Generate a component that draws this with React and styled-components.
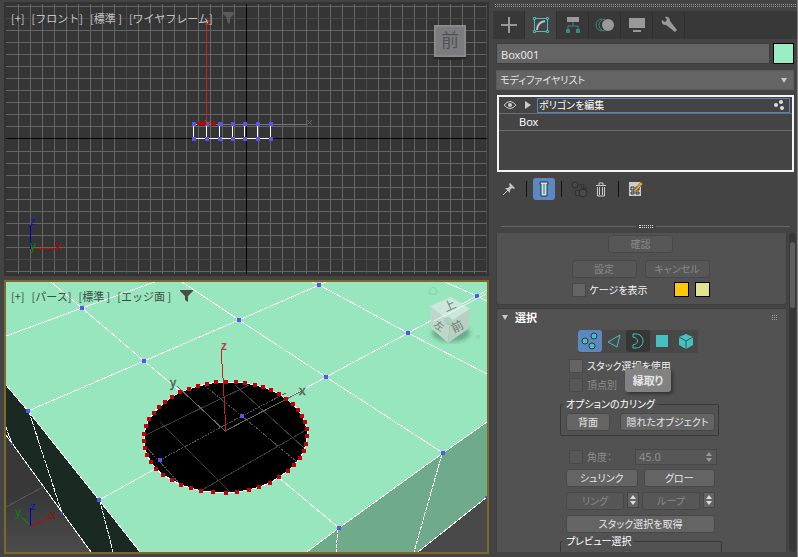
import { useState } from "react";
import styled, { createGlobalStyle, css } from "styled-components";

const GlobalStyle = createGlobalStyle`
    * {
        box-sizing: border-box;
    }
    body {
        margin: 0;
        background: #444;
        color: #e6e6e6;
        font-family: "Noto Sans", "Noto Sans CJK JP", sans-serif;
        font-size: 11px;
        line-height: 16px;
    }
    button, input, select {
        margin: 0;
        padding: 0;
        border: 0;
        font: inherit;
        color: inherit;
    }
`;

const Workspace = styled.div`
    display: grid;
    grid-template-columns: minmax(0, 1fr) 305px;
    gap: 4px;
    height: 100vh;
    padding-left: 4px;
`;

const Viewports = styled.main`
    display: grid;
    grid-template-rows: minmax(0, 1fr) minmax(0, 1fr);
    gap: 4px;
    padding: 2px 0 3px;
`;

const Viewport = styled.section`
    position: relative;
    overflow: hidden;
    border: 2px solid ${props => props.$active ? '#7e672a' : '#333'};
    background: #353535;
`;

const Scene = styled.svg`
    display: block;
    width: 100%;
    height: 100%;
    font-family: "Liberation Sans", sans-serif;
`;

const ViewportMenu = styled.div`
    position: absolute;
    top: ${props => props.$top}px;
    left: 5px;
    display: flex;
    align-items: center;
    gap: 7px;
`;

const ViewportLabel = styled.button`
    background: none;
    color: ${props => props.$dark ? '#3c4a43' : '#c4c4c4'};
    font-family: "Noto Sans CJK JP", sans-serif;
    white-space: nowrap;
`;

const FilterButton = styled.button`
    display: flex;
    margin-left: 2px;
    background: none;
    color: ${props => props.$dark ? '#4c4c4c' : '#5a5a5a'};
`;

const Panel = styled.aside`
    display: flex;
    flex-direction: column;
    min-height: 0;
    padding-bottom: 5px;
    border-right: 1px solid #858585;
    font-size: 10px;
    font-feature-settings: "palt";
`;

const Grip = styled.div`
    height: 3px;
    margin: 4px 1px 4px 2px;
    border-top: 1px dotted #999;
    border-bottom: 1px dotted #999;
`;

const Tabs = styled.nav`
    display: flex;
    height: 28px;
    background: #383838;
`;

const Tab = styled.button`
    display: flex;
    align-items: center;
    justify-content: center;
    width: 32px;
    border-right: 1px solid #303030;
    background: ${props => props.$active ? '#444' : 'none'};
`;

const NameRow = styled.div`
    display: flex;
    align-items: center;
    gap: 3px;
    margin: 4px 3px 0;
`;

const NameInput = styled.input`
    flex: 1;
    min-width: 0;
    height: 21px;
    padding: 1px 4px 0;
    border: 1px solid #3d3d3d;
    background: #646464;
    font-size: 11px;
`;

const Swatch = styled.button`
    width: ${props => props.$large ? 21 : 15}px;
    height: ${props => props.$large ? 21 : 15}px;
    border: 1px solid #000;
    background: ${props => props.$color};
`;

const ModifierSelect = styled.div`
    position: relative;
    margin: 6px 3px 0;

    select {
        display: block;
        width: 100%;
        height: 20px;
        padding: 0 3px;
        border: 1px solid #5a5a5a;
        appearance: none;
        background: #646464;
    }
    svg {
        position: absolute;
        right: 7px;
        top: 8px;
        pointer-events: none;
    }
`;

const Stack = styled.ul`
    height: 77px;
    margin: 5px 3px 0 4px;
    padding: 0;
    border: 2px solid #f4f4f4;
    list-style: none;
`;

const StackRow = styled.li`
    display: flex;
    align-items: center;
    height: 17px;
    padding: 0 2px 0 4px;
    border-bottom: 1px solid #6c6c6c;
`;

const StackName = styled.span`
    flex: 1;
    height: 15px;
    line-height: 14px;
    color: #fff;
    ${props => props.$selected ? css`
        display: flex;
        align-items: center;
        justify-content: space-between;
        margin-left: 6px;
        padding: 0 4px 0 1px;
        border: 1px solid #5a82bb;
    ` : css`
        margin-left: 16px;
        font-size: 11px;
    `}
`;

const Toolbar = styled.div`
    display: flex;
    align-items: center;
    height: 22px;
    margin: 6px 3px 0;
    padding-left: 2px;
`;

const ToolButton = styled.button`
    display: flex;
    align-items: center;
    justify-content: center;
    width: 22px;
    height: 22px;
    border-radius: 3px;
    background: ${props => props.$active ? '#5c88c2' : 'none'};
`;

const Separator = styled.span`
    width: 1px;
    height: 16px;
    margin: 0 6px;
    background: #111;
`;

const Splitter = styled.div`
    display: flex;
    align-items: center;
    gap: 3px;
    height: 5px;
    margin: 24px 7px 4px 8px;

    &::before, &::after {
        content: "";
        flex: 1;
        height: 1px;
        background: #666;
    }
    span {
        width: 14px;
        height: 3px;
        border-top: 1px dotted #ddd;
        border-bottom: 1px dotted #ddd;
    }
`;

const ScrollArea = styled.div`
    display: flex;
    flex: 1;
    gap: 2px;
    min-height: 0;
    padding: 0 1px 0 3px;
`;

const Rollouts = styled.div`
    display: flex;
    flex: 1;
    flex-direction: column;
    gap: 3px;
    min-width: 0;
    overflow: hidden;
`;

const ScrollTrack = styled.div`
    width: 7px;
    padding-top: 9px;
    border-radius: 4px;
    background: #373737;
`;

const ScrollThumb = styled.div`
    width: 5px;
    height: 66px;
    margin: 0 1px;
    border-radius: 3px;
    background: #5e5e5e;
`;

const Rollout = styled.section`
    flex: none;
    border: 1px solid #3e3e3e;
    border-radius: ${props => props.$open ? '0 0 3px 3px' : '3px'};
    background: #525252;
    ${props => props.$open && css`
        border-top: 0;
    `}
`;

const CageRollout = styled.div`
    display: flex;
    flex-direction: column;
    align-items: center;
    height: 71px;
    padding: 2px 2px 0 0;
`;

const ButtonPair = styled.div`
    display: flex;
    gap: 8px;
    margin-top: 7px;
`;

const CageOptions = styled.div`
    display: flex;
    align-items: center;
    gap: 6px;
    width: 138px;
    margin: 4px 0 0;

    label {
        flex: 1;
    }
`;

const PushButton = styled.button`
    width: ${props => props.$width ? props.$width + 'px' : 'auto'};
    flex: ${props => props.$width ? 'none' : 1};
    height: 18px;
    border: 1px solid #484848;
    border-radius: 3px;
    background: #646464;
    line-height: 16px;
    white-space: nowrap;

    &:disabled {
        background: #575757;
        color: #898989;
    }
`;

const CheckLabel = styled.label`
    display: flex;
    align-items: center;
    gap: 4px;
    height: 15px;
    color: ${props => props.$disabled ? '#8d8d8d' : '#f2f2f2'};
    white-space: nowrap;

    input {
        width: 14px;
        height: 14px;
        border: 1px solid #494949;
        appearance: none;
        background: ${props => props.$disabled ? '#575757' : '#646464'};
    }
    input:checked {
        background: #5c88c2;
    }
`;

const PreviewRadio = styled.input`
    width: 14px;
    height: 14px;
    margin-right: 30px;
    border: 1px solid #494949;
    border-radius: 50%;
    appearance: none;
    background: #646464;
`;

const RolloutTitle = styled.button`
    display: flex;
    align-items: center;
    gap: 7px;
    width: 100%;
    height: 17px;
    padding: 0 8px 0 5px;
    background: none;
    color: #fff;
    font-weight: bold;
    font-size: 11px;

    span {
        flex: 1;
        text-align: left;
    }
`;

const SelectionBody = styled.div`
    width: 162px;
    margin-left: 63px;
`;

const SubObjects = styled.div`
    display: flex;
    width: 120px;
    height: 23px;
    margin: 4px 0 0 18px;
    background: #484848;
`;

const SubObject = styled.button`
    position: relative;
    display: flex;
    align-items: center;
    justify-content: center;
    width: 24px;
    height: 22px;
    border-radius: 3px;
    background: ${props => props.$active ? '#5c88c2' : props.$hover ? '#363636' : 'none'};
`;

const Tooltip = styled.span`
    position: absolute;
    z-index: 1;
    top: 39px;
    left: -1px;
    width: 46px;
    height: 23px;
    border-radius: 3px;
    background: #828282;
    box-shadow: 2px 2px 3px #333;
    color: #e4e4e4;
    font-size: 11px;
    font-weight: bold;
    line-height: 23px;

    &::before {
        content: "";
        position: absolute;
        top: -7px;
        left: 8px;
        border: 6px solid transparent;
        border-top: 0;
        border-bottom: 7px solid #828282;
    }
`;

const Checks = styled.div`
    display: flex;
    flex-direction: column;
    gap: 4px;
    margin: 5px 0 4px 9px;
`;

const Group = styled.fieldset`
    display: flex;
    gap: 10px;
    min-width: 0;
    margin: 0 ${props => props.$wide ? 0 : 3}px 0 0;
    padding: 1px 3px 4px 5px;
    border: 1px solid #383838;
    border-radius: 2px;

    legend {
        margin-left: -3px;
        padding: 0 3px;
        color: #fff;
        line-height: 16px;
    }
`;

const Form = styled.div`
    display: grid;
    gap: 5px;
    margin: 13px 7px 0 6px;
`;

const FormRow = styled.div`
    display: flex;
    gap: ${props => props.$gap || 6}px;
`;

const AngleRow = styled.div`
    display: flex;
    align-items: center;
    justify-content: space-between;
    height: 15px;
    margin: 0 -2px 0 3px;
`;

const AngleField = styled.div`
    display: flex;
    align-items: center;
    width: 82px;
    height: 16px;
    padding: 0 4px 0 3px;
    border: 1px solid #484848;
    background: #575757;
    color: #8d8d8d;

    input {
        flex: 1;
        min-width: 0;
        height: 14px;
        background: none;
        font-size: 11px;
    }
`;

const Spinner = styled.button`
    display: flex;
    align-items: center;
    justify-content: center;
    width: 12px;
    height: 16px;
    background: #646464;
    border: 1px solid #474747;
`;

const CYAN = '#46c1c1';

const Arrows = ({ color = '#ddd' }) => (
    <svg width="6" height="10" viewBox="0 0 6 10" fill={color}>
        <path d="M0 4 3 0l3 4zM0 6h6L3 10z" />
    </svg>
);

const Funnel = () => (
    <svg width="13" height="12" viewBox="0 0 13 12" fill="currentColor">
        <path d="M0 0h13v1L8 6v6L5 10V6L0 1z" />
    </svg>
);

const DownArrow = ({ size = 6 }) => (
    <svg width={size} height={size - 1} viewBox="0 0 6 5" fill="#c8c8c8">
        <path d="M0 0h6L3 5z" />
    </svg>
);

const TABS = [
    ['作成', <svg key="i" width="18" height="18" stroke="#999" strokeWidth="2"><path d="M9 1v16M1 9h16" /></svg>],
    ['修正', <svg key="i" width="18" height="18" fill="none" stroke={CYAN}>
        <path d="M3.5 2.5h11M3.5 15.5h11M2.5 3.5v11M15.5 3.5v11" />
        <path d="M1.5 1.5h2v2h-2zM14.5 1.5h2v2h-2zM1.5 14.5h2v2h-2zM14.5 14.5h2v2h-2z" fill="#444" />
        <path d="M5 14c0-5 3-8 8-9" stroke="#c0c0c0" strokeWidth="2" />
    </svg>],
    ['階層', <svg key="i" width="16" height="18">
        <path d="M2 1h12v5H2z" fill="#999" />
        <path d="M8 6v4M3 14v-4h10v4" fill="none" stroke="#3a8585" strokeWidth="1" />
        <path d="M1 13h4v4H1zM11 13h4v4h-4z" fill="#3a8585" />
    </svg>],
    ['モーション', <svg key="i" width="20" height="16">
        <path d="M7 2a6 6 0 0 0 0 12M10 2a6 6 0 0 0 0 12" fill="none" stroke="#3a8585" />
        <circle cx="13" cy="8" r="6" fill="#999" />
    </svg>],
    ['表示', <svg key="i" width="18" height="16" fill="#999"><path d="M1 1h16v10H1zM5 13h8v2H5z" /></svg>],
    ['ユーティリティ', <svg key="i" width="18" height="18">
        <path d="M2 4l3 2 2-2-2-3c3-1 5 1 5 4l7 9-2 2-9-7C3 9 1 7 2 4z" fill="#999" />
    </svg>],
];

const VertexIcon = () => (
    <svg width="18" height="18" fill={CYAN} stroke="#333">
        <circle cx="13" cy="4" r="3" /><circle cx="4" cy="9" r="3" /><circle cx="11" cy="14" r="3" />
    </svg>
);

const SUB_OBJECTS = [
    ['頂点', <VertexIcon key="i" />],
    ['エッジ', <svg key="i" width="14" height="16" fill="none" stroke={CYAN}><path d="M13 2 1 9l9 5z" /></svg>],
    ['縁取り', <svg key="i" width="14" height="16" fill="none" stroke={CYAN}>
        <path d="M2 1h3c4 0 7 3 7 7s-3 7-7 7H2v-3c6-1 6-7 0-8z" />
    </svg>],
    ['ポリゴン', <svg key="i" width="14" height="14" fill={CYAN}><path d="M1 1h12v12H1z" /></svg>],
    ['要素', <svg key="i" width="16" height="16">
        <path d="m8 1 7 3v8l-7 4-7-4V4z" fill={CYAN} />
        <path d="m1 4 7 4 7-4M8 8v8" fill="none" stroke="#3c5555" />
    </svg>],
];

const Dots = ({ points, color, size = 4 }) => points.map(([x, y]) => (
    <rect key={`${x}-${y}`} x={x - size / 2} y={y - size / 2} width={size} height={size} fill={color} />
));

const GRID_X = Array.from({ length: 40 }, (_, i) => 18 + i * 12);
const GRID_Y = [...Array.from({ length: 11 }, (_, i) => 6 + i * 12), ...Array.from({ length: 11 }, (_, i) => 151 + i * 12)];
const BOX_X = [194, 207, 220, 233, 245, 258, 271];

const FrontScene = () => (
    <Scene viewBox="6 4 481 270" preserveAspectRatio="xMinYMin slice" aria-label="フロント">
        {GRID_X.map(x => <rect key={x} x={x} y="4" width="1" height="270" fill={x % 120 === 6 ? '#484848' : '#646464'} />)}
        {GRID_Y.map(y => <rect key={y} x="6" y={y} width="481" height="1" fill={y === 18 || y === 259 ? '#484848' : '#646464'} />)}
        <path d="M246 4h1v270h-1zM6 138h481v1H6z" fill="#000" />
        <g shapeRendering="crispEdges">
            <path d="M194 124.5h13M193 138.5h79" stroke="#fff" />
            {BOX_X.map(x => <path key={x} d={`M${x - 0.5} 124v15`} stroke="#fff" />)}
            <path d="M207 124.5h100" stroke="#777" />
            <Dots color="#5555f5" points={BOX_X.flatMap(x => [[x, 124], [x, 139]])} />
            <path d="M197 122h9v3h-9zM211 122h5v3h-5z" fill="#c00" />
            <path d="M206.500 24v101" stroke="#c92020" />
            <path d="M206 20h4l-4 4h4" stroke="#c92020" fill="none" />
            <path d="M30.500 225v24" stroke="#00c" />
            <path d="M31 248.500h25" stroke="#c00" />
        </g>
        <path d="m205 120 3 4m3-4-4 6M307 120l5 5m0-5-5 5" stroke="#686868" />
        <text x="30" y="225" fontSize="11" fill="#11c">z</text>
        <text x="30" y="250" fontSize="12" fill="#0a820a">y</text>
        <text x="55" y="250" fontSize="12" fill="#b00">x</text>
        <ellipse cx="450" cy="58" rx="17" ry="2" fill="#292929" />
        <rect x="434" y="25" width="32" height="32" fill="#909090" opacity="0.85" />
        <rect x="435" y="26" width="30" height="30" fill="#7b7b7d" stroke="#9a9a9a" opacity="0.8" />
        <text x="450" y="47" textAnchor="middle" fontSize="18" fill="#505256" fontFamily="Noto Sans CJK JP">前</text>
    </Scene>
);

const BORDER_POINTS = [
    [144, 434], [146, 426], [149, 419], [154, 413], [159, 407], [165, 402], [172, 397], [180, 392], [189, 389],
    [198, 386], [207, 384], [216, 382], [226, 382], [236, 382], [245, 383], [255, 385], [263, 387], [271, 390],
    [279, 394], [286, 399], [293, 404], [298, 410], [302, 416], [305, 422], [307, 429], [307, 436], [306, 444],
    [304, 451], [300, 458], [294, 465], [288, 471], [279, 477], [270, 483], [259, 487], [249, 490], [237, 492],
    [226, 493], [213, 492], [201, 491], [191, 488], [181, 485], [172, 480], [163, 475], [156, 469], [151, 462],
    [147, 455], [145, 448], [144, 441],
];
const MESH_POINTS = [
    [82, 308], [144, 361], [239, 320], [28, 411], [99, 500], [242, 416], [160, 460],
    [319, 285], [408, 333], [477, 296], [326, 377], [443, 453], [339, 528],
];

const PerspectiveScene = () => (
    <Scene viewBox="6 282 481 270" preserveAspectRatio="xMinYMin slice" aria-label="パース">
        <defs>
            <linearGradient id="ground" x1="0" y1="0" x2="0" y2="1">
                <stop offset="0.5" stopColor="#383838" />
                <stop offset="1" stopColor="#4c4c4c" />
            </linearGradient>
            <filter id="soft"><feGaussianBlur stdDeviation="2" /></filter>
        </defs>
        <rect x="6" y="282" width="481" height="270" fill="#97e6bd" />
        <g shapeRendering="crispEdges">
            <path d="M6 385 28 411 99 500 140 552H6z" fill="#1a2922" />
            <path d="M6 435 91 552H6z" fill="url(#ground)" />
            <path d="m6 507 37-20" stroke="#555" />
            <path d="m307 552 32-24 104-75 44-31v130z" fill="#6faa8a" />
            <path d="m487 497-69 55h69z" fill="#494949" />
            <g fill="none" stroke="#fff">
                <path d="M51 282 82 308 144 361 180 391M6 336 82 308 155 282" />
                <path d="M28 411 144 361 239 320 319 285 326 282M182 282 239 320 326 377 443 453" />
                <path d="M312 282 319 285 408 333 487 374M445 282 477 296 487 301" />
                <path d="M487 290 477 296 408 333 326 377 286 399M99 500 157 468M278 477 339 528" />
                <path d="M6 385 28 411 99 500 140 552M6 435 91 552" />
                <path d="M307 552 339 528 443 453 487 422M487 497 418 552" />
                <path d="M29 412 62 513M100 501 113 552M6 427 12 444M442 454 414 552M338 529 336 552" strokeDasharray="4 1" />
            </g>
            <polygon points={BORDER_POINTS.join(' ')} fill="#000" stroke="#fff" />
            <path d="M146 435 249 385M160 422 230 492M202 490 306 430M235 385 304 448" stroke="#3d3d3d" />
            <path d="M146 447 181 485M160 460 242 416 286 393M205 386 242 416 297 462" fill="none" stroke="#555" strokeDasharray="2 1" />
            <path d="m177 386 48 45 77-40" fill="none" stroke="#696969" />
            <path d="m221 349 2 29 3 54" fill="none" stroke="#c92020" />
            <Dots color="#5555f5" points={MESH_POINTS} />
            <Dots color="#5555f5" size={2} points={[[12, 444], [62, 513], [486, 497]]} />
            <Dots color="#c80000" points={BORDER_POINTS} />
            <path d="m31 526 22-10" stroke="#c00" />
            <path d="m31 526-12-11" stroke="#0a820a" />
            <path d="M30.500 508v18" stroke="#00c" />
        </g>
        <text x="221" y="350" fontSize="12" fontWeight="bold" fill="#b54444">z</text>
        <text x="170" y="387" fontSize="12" fill="#4d6a5c" stroke="#4d6a5c" strokeWidth="0.500">y</text>
        <text x="299" y="395" fontSize="13" fill="#4d6a5c" stroke="#4d6a5c" strokeWidth="0.500">x</text>
        <text x="15" y="516" fontSize="12" fill="#0a820a">y</text>
        <text x="30" y="510" fontSize="11" fill="#11c">z</text>
        <text x="50" y="519" fontSize="12" fill="#8e1111">x</text>
        <ellipse cx="451" cy="333" rx="19" ry="9" fill="#4f8268" opacity="0.600" filter="url(#soft)" />
        <path d="m430 306 21-9 19 12-20 13z" fill="#cbe7d9" />
        <path d="m430 306 20 16-2 21-17-15z" fill="#bed7ca" />
        <path d="m470 309-20 13-2 21 20-14z" fill="#b8cfc2" />
        <path d="m434 321 52-27" stroke="#fff" opacity="0.700" />
        <g fontFamily="Noto Sans CJK JP" fontSize="12" fill="#6b7f75">
            <text transform="translate(446 312) rotate(-25)">上</text>
            <text transform="translate(433 326) rotate(35)" fontSize="10">左</text>
            <text transform="translate(454 333) rotate(-28)">前</text>
        </g>
        <circle cx="448" cy="321" r="4" fill="#a8cbbd" opacity="0.8" />
        <path d="M429 294v-4l4-3 4 3v4zM476 336h4l-2 3z" fill="none" stroke="#86d0aa" />
    </Scene>
);

const ViewportHeader = ({ labels, dark, top }) => (
    <ViewportMenu $top={top}>
        {labels.map(label => <ViewportLabel key={label} $dark={dark}>{label}</ViewportLabel>)}
        <FilterButton $dark={dark} aria-label="フィルタ"><Funnel /></FilterButton>
    </ViewportMenu>
);

const ExpandArrow = styled.svg`
    margin-left: 8px;
`;

const ModifierStack = () => (
    <Stack>
        <StackRow>
            <svg width="14" height="10">
                <path d="M1 5q6-7 12 0-6 7-12 0z" fill="none" stroke="#ccc" />
                <circle cx="7" cy="5" r="2" fill="#ccc" />
            </svg>
            <ExpandArrow width="6" height="8" fill="#ccc"><path d="m0 0 6 4-6 4z" /></ExpandArrow>
            <StackName $selected>
                ポリゴンを編集
                <svg width="11" height="10" fill="#ddd">
                    <circle cx="2" cy="5" r="2" /><circle cx="7" cy="2" r="2" /><circle cx="8" cy="8" r="2" />
                </svg>
            </StackName>
        </StackRow>
        <StackRow><StackName>Box</StackName></StackRow>
    </Stack>
);

const StackTools = () => (
    <Toolbar>
        <ToolButton aria-label="スタックを固定">
            <svg width="14" height="14">
                <path d="m8 1 5 5-1 1-2-1-2 2v3L3 6h3l2-2-1-2z" fill="#c4c4c4" />
                <path d="m6 8-5 5" stroke="#c4c4c4" />
            </svg>
        </ToolButton>
        <Separator />
        <ToolButton $active aria-label="最終結果を表示">
            <svg width="10" height="16">
                <path d="M1 1h8v2H8v12H2V3H1z" fill="#ddd" stroke="#333" />
                <path d="M4 3h2v10H4z" fill={CYAN} />
            </svg>
        </ToolButton>
        <Separator />
        <ToolButton aria-label="固有にする">
            <svg width="17" height="17" fill="#494949" stroke="#2d2d2d">
                <circle cx="4" cy="4" r="3" /><circle cx="7" cy="12" r="3" />
                <circle cx="12" cy="12" r="4" /><path d="M8 4h5v4M10 6l3 3 3-3" fill="none" />
            </svg>
        </ToolButton>
        <ToolButton aria-label="モディファイヤを除去">
            <svg width="12" height="15" fill="none" stroke="#ccc">
                <path d="M1 3.500h10M4 3V1h4v2M2.500 5v9h7V5M4.500 5v8M7.500 5v8" />
            </svg>
        </ToolButton>
        <Separator />
        <ToolButton aria-label="モディファイヤセットを設定">
            <svg width="16" height="16">
                <path d="M1 1h12v14H1z" fill="#ccc" />
                <path d="M3 6h3v3H3zM8 6h3v3H8zM3 11h3v2H3zM8 11h3v2H8z" fill="#ccc" stroke="#333" />
                <path d="m6 9 7-8 2 2-7 7-3 1z" fill="#f2a81d" stroke="#333" strokeWidth="0.500" />
            </svg>
        </ToolButton>
    </Toolbar>
);

const SelectionRollout = () => {
    const [subObject, setSubObject] = useState('頂点');
    const [useStack, setUseStack] = useState(false);

    return (
        <Rollout>
            <RolloutTitle>
                <DownArrow />
                <span>選択</span>
                <svg width="6" height="6" fill="#999">
                    <path d="M0 0h1v1H0zM2 0h1v1H2zM4 0h1v1H4zM0 2h1v1H0zM2 2h1v1H2zM4 2h1v1H4zM0 4h1v1H0zM2 4h1v1H2zM4 4h1v1H4z" />
                </svg>
            </RolloutTitle>
            <SelectionBody>
                <SubObjects>
                    {SUB_OBJECTS.map(([name, icon]) => (
                        <SubObject key={name} aria-label={name} $active={name === subObject}
                            $hover={name === '縁取り'} onClick={() => setSubObject(name)}>
                            {icon}
                            {name === '縁取り' && <Tooltip role="tooltip">縁取り</Tooltip>}
                        </SubObject>
                    ))}
                </SubObjects>
                <Checks>
                    <CheckLabel>
                        <input type="checkbox" checked={useStack} onChange={e => setUseStack(e.target.checked)} />
                        スタック選択を使用
                    </CheckLabel>
                    <CheckLabel $disabled><input type="checkbox" disabled />頂点別</CheckLabel>
                </Checks>
                <Group>
                    <legend>オプションのカリング</legend>
                    <PushButton $width={44}>背面</PushButton>
                    <PushButton>隠れたオブジェクト</PushButton>
                </Group>
                <Form>
                    <AngleRow>
                        <CheckLabel $disabled><input type="checkbox" disabled />角度：</CheckLabel>
                        <AngleField>
                            <input aria-label="角度" defaultValue="45.0" disabled />
                            <Arrows color="#999" />
                        </AngleField>
                    </AngleRow>
                    <FormRow>
                        <PushButton>シュリンク</PushButton>
                        <PushButton>グロー</PushButton>
                    </FormRow>
                    <FormRow $gap={3}>
                        <PushButton disabled>リング</PushButton>
                        <Spinner aria-label="リング"><Arrows /></Spinner>
                        <PushButton disabled>ループ</PushButton>
                        <Spinner aria-label="ループ"><Arrows /></Spinner>
                    </FormRow>
                    <FormRow>
                        <PushButton>スタック選択を取得</PushButton>
                    </FormRow>
                </Form>
                <Group $wide>
                    <legend>プレビュー選択</legend>
                    <PreviewRadio type="radio" name="preview" aria-label="オフ" />
                    <PreviewRadio type="radio" name="preview" aria-label="サブオブジェクト" />
                </Group>
            </SelectionBody>
        </Rollout>
    );
};

const App = () => {
    const [objectName, setObjectName] = useState('Box001');

    return (
        <Workspace>
            <GlobalStyle />
            <Viewports>
                <Viewport>
                    <FrontScene />
                    <ViewportHeader labels={['[+]', '[フロント]', '[標準 ]', '[ワイヤフレーム]']} top={6} />
                </Viewport>
                <Viewport $active>
                    <PerspectiveScene />
                    <ViewportHeader labels={['[+]', '[パース]', '[標準 ]', '[エッジ面 ]']} top={6} dark />
                </Viewport>
            </Viewports>
            <Panel>
                <Grip />
                <Tabs>
                    {TABS.map(([name, icon], i) => <Tab key={name} aria-label={name} $active={i === 1}>{icon}</Tab>)}
                </Tabs>
                <NameRow>
                    <NameInput aria-label="名前" value={objectName} onChange={e => setObjectName(e.target.value)} />
                    <Swatch $large $color="#9aeec4" aria-label="オブジェクトカラー" />
                </NameRow>
                <ModifierSelect>
                    <select aria-label="モディファイヤ">
                        <option>モディファイヤリスト</option>
                    </select>
                    <DownArrow />
                </ModifierSelect>
                <ModifierStack />
                <StackTools />
                <Splitter><span /></Splitter>
                <ScrollArea>
                    <Rollouts>
                        <Rollout $open>
                            <CageRollout>
                                <PushButton $width={65} disabled>確認</PushButton>
                                <ButtonPair>
                                    <PushButton $width={65} disabled>設定</PushButton>
                                    <PushButton $width={65} disabled>キャンセル</PushButton>
                                </ButtonPair>
                                <CageOptions>
                                    <CheckLabel><input type="checkbox" />ケージを表示</CheckLabel>
                                    <Swatch $color="#ffc800" aria-label="ケージの色" />
                                    <Swatch $color="#e4e48c" aria-label="選択ケージの色" />
                                </CageOptions>
                            </CageRollout>
                        </Rollout>
                        <SelectionRollout />
                    </Rollouts>
                    <ScrollTrack><ScrollThumb /></ScrollTrack>
                </ScrollArea>
            </Panel>
        </Workspace>
    );
};

export default App;
